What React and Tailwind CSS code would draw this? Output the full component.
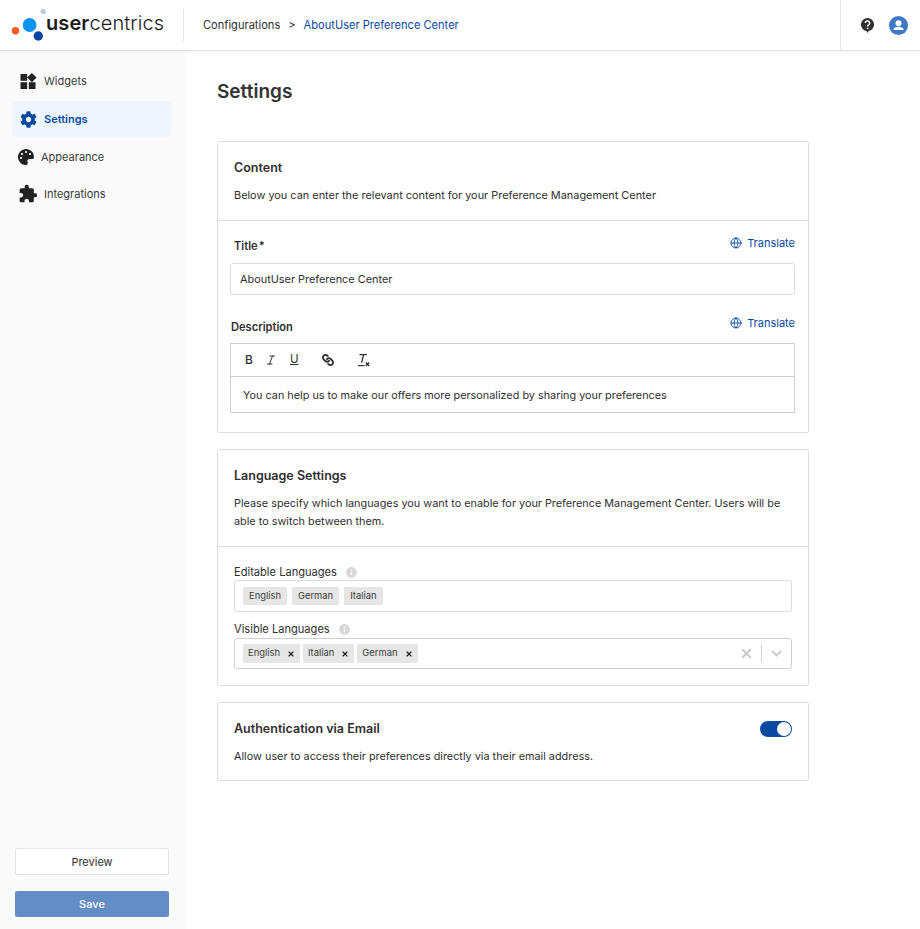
import React from "react";
import { Globe, Italic, X, ChevronDown } from "lucide-react";
import { FaCog, FaPalette, FaLink } from "react-icons/fa";
import { MdWidgets, MdExtension, MdInfo } from "react-icons/md";

const NAV_LINKS = [
  { name: "Widgets", icon: MdWidgets, size: 21, box: "ml-[6px] w-[20px]", gap: "ml-[6px]", extra: "text-[#3a3a3a]" },
  { name: "Settings", icon: FaCog, size: 17, box: "ml-[6px] w-[20px]", gap: "ml-[6px]", active: true, extra: "mt-[2px]" },
  { name: "Appearance", icon: FaPalette, size: 16, box: "ml-[5px] w-[18px]", gap: "ml-[6px]", extra: "mt-[2px] text-[#3a3a3a]" },
  { name: "Integrations", icon: MdExtension, size: 20, box: "ml-[6px] w-[20px]", gap: "ml-[6px]", extra: "mt-[1px] text-[#3a3a3a]" },
];

function Logo() {
  return (
    <div className="flex items-center">
      <svg width="48" height="44" viewBox="0 0 48 44" className="shrink-0">
        <circle cx="15.5" cy="27.7" r="3.7" fill="#f25a22" />
        <circle cx="29.6" cy="22" r="6.9" fill="#0f95f0" />
        <circle cx="38.3" cy="33" r="4.7" fill="#0d47a1" />
        <circle cx="43.3" cy="8.5" r="2.6" fill="#b6cfe6" />
      </svg>
      <span className="-ml-[2px] -mt-[4px] text-[20px] leading-none tracking-[0.005em] text-[#1b1b1b]">
        <span className="font-semibold">user</span>
        <span className="font-light">centrics</span>
      </span>
    </div>
  );
}

function HelpBubble() {
  return (
    <svg width="15" height="17" viewBox="0 0 16 18">
      <path d="M8 1a7 7 0 0 1 1.2 13.9L8 17l-1.2-2.1A7 7 0 0 1 8 1z" fill="#2f2f2f" />
      <path d="M5.7 6.4a2.3 2.3 0 1 1 3.6 1.9c-.8.5-1.2.9-1.2 1.7" fill="none" stroke="#fff" strokeWidth="1.6" />
      <circle cx="8.1" cy="12" r="1" fill="#fff" />
    </svg>
  );
}

function UserBadge() {
  return (
    <svg width="19" height="19" viewBox="0 0 19 19">
      <circle cx="9.5" cy="9.5" r="9.5" fill="#3f78c4" />
      <circle cx="9.5" cy="7.2" r="3" fill="#fff" />
      <path d="M4.5 14v-.8c0-1.5 2.2-2.4 5-2.4s5 .9 5 2.4v.8z" fill="#fff" />
    </svg>
  );
}

function ClearFormat() {
  return (
    <svg width="13" height="14" viewBox="0 0 13 14" fill="none" stroke="#333">
      <path d="M2.5 1.7h7.5M6.6 1.7 4.6 9.6" strokeWidth="1.3" />
      <path d="M1 12.6h6.5" strokeWidth="1.2" />
      <path d="M8.8 9.5l3.4 3.6M12.2 9.5l-3.4 3.6" strokeWidth="1.4" />
    </svg>
  );
}

function TranslateLink() {
  return (
    <button className="flex items-center gap-[5px] text-[11px] leading-none text-[#0b4aa3]">
      <Globe className="h-[12px] w-[12px]" strokeWidth={1.8} />
      <span>Translate</span>
    </button>
  );
}

function Card({ children }) {
  return <section className="w-[592px] rounded-[2px] border border-[#dedede] bg-white">{children}</section>;
}

function Tag({ label, removable }) {
  return (
    <span className={`flex items-center rounded-[1px] bg-[#e6e6e6] text-[9.4px] text-[#3b3b3b] ${removable ? "h-[19px] px-[5px]" : "h-[18px] px-[6px]"}`}>
      {label}
      {removable && <X className="ml-[7px] h-[8px] w-[8px] text-[#222]" strokeWidth={3.5} />}
    </span>
  );
}

function InfoDot() {
  return <MdInfo className="h-[13px] w-[13px] text-[#d9d9d9]" />;
}

export default function App() {
  return (
    <div className="flex min-h-[929px] flex-col bg-white text-[#2f2f2f] [font-family:Inter,'Liberation_Sans',sans-serif]">
      <header className="z-10 flex h-[51px] shrink-0 items-center border-b border-[#e3e3e3] bg-white shadow-[0_1px_2px_rgba(0,0,0,0.06)]">
        <div className="flex h-[32px] w-[184px] items-center border-r border-[#e3e3e3]">
          <Logo />
        </div>
        <nav className="ml-[19px] flex items-center text-[11.1px] text-[#2f2f2f]">
          <span>Configurations</span>
          <span className="mx-[8px]">&gt;</span>
          <span className="text-[#0b4aa3]">AboutUser Preference Center</span>
        </nav>
        <div className="ml-auto flex h-full w-[80px] items-center border-l border-[#e3e3e3] pl-[19px]">
          <HelpBubble />
          <span className="ml-[14px]">
            <UserBadge />
          </span>
        </div>
      </header>

      <div className="flex flex-1">
        <aside className="flex w-[185px] shrink-0 flex-col bg-[#fafafa] pb-[12px] pl-[12px] pr-[13px] pt-[12px]">
          <nav className="flex flex-col">
            {NAV_LINKS.map((item) => {
              const Icon = item.icon;
              return (
                <a
                  key={item.name}
                  className={`flex h-[36px] items-center rounded-[6px] text-[11px] ${item.active ? "bg-[#f0f6fd] font-semibold text-[#0b4aa3]" : ""} ${item.extra}`}
                >
                  <span className={`flex items-center justify-center ${item.name === "Settings" ? "text-[#0b4aa3]" : "text-[#222]"} ${item.box}`}>
                    <Icon size={item.size} />
                  </span>
                  <span className={item.gap}>{item.name}</span>
                </a>
              );
            })}
          </nav>
          <div className="mt-auto flex flex-col gap-[16px] px-[3px]">
            <button className="h-[27px] rounded-[2px] border border-[#e6e6e6] bg-white pt-[1px] text-[11px] text-[#2f2f2f]">Preview</button>
            <button className="h-[26px] rounded-[2px] bg-[#638dc6] text-[11px] font-medium text-white">Save</button>
          </div>
        </aside>

        <main className="flex-1 pl-[32px] pt-[29px]">
          <h1 className="mb-[37px] text-[19px] font-semibold leading-[24px] text-[#333]">Settings</h1>

          <div className="flex flex-col gap-[16px]">
            <Card>
              <div className="border-b border-[#dedede] px-[16px] py-[17px]">
                <h2 className="text-[12.5px] font-semibold leading-[18px]">Content</h2>
                <p className="mt-[10px] text-[10.9px] leading-[16px]">Below you can enter the relevant content for your Preference Management Center</p>
              </div>
              <div className="pb-[19px] pl-[12px] pr-[13px] pt-[16px]">
                <div className="flex items-start justify-between">
                  <label className="ml-[4px] mt-[2px] text-[11.1px] font-semibold leading-[14px]">
                    Title<span className="ml-[1px]">*</span>
                  </label>
                  <TranslateLink />
                </div>
                <div className="mt-[10px] flex h-[32px] items-center rounded-[3px] border border-[#dcdcdc] pl-[9px] text-[10.9px]">AboutUser Preference Center</div>

                <div className="mt-[22px] flex items-start justify-between">
                  <label className="ml-[1px] mt-[3px] text-[11.1px] font-semibold leading-[14px]">Description</label>
                  <TranslateLink />
                </div>
                <div className="mt-[9px] border border-[#cfcfcf]">
                  <div className="flex h-[33px] items-center border-b border-[#cfcfcf] pl-[14px] text-[#333]">
                    <span className="w-[20px] text-[12px] font-medium leading-none">B</span>
                    <Italic className="mr-[13px] h-[12px] w-[12px]" strokeWidth={2} />
                    <span className="w-[32px] text-[11.5px] leading-none underline">U</span>
                    <FaLink className="mr-[23px] h-[12px] w-[12px] rotate-90" />
                    <ClearFormat />
                  </div>
                  <div className="flex h-[35px] items-center pl-[12px] pt-[1px] text-[10.85px]">You can help us to make our offers more personalized by sharing your preferences</div>
                </div>
              </div>
            </Card>

            <Card>
              <div className="border-b border-[#dedede] px-[16px] pb-[16px] pt-[17px]">
                <h2 className="text-[12.5px] font-semibold leading-[18px]">Language Settings</h2>
                <p className="mt-[9px] text-[10.85px] leading-[18px]">Please specify which languages you want to enable for your Preference Management Center. Users will be able to switch between them.</p>
              </div>
              <div className="px-[16px] pb-[16px] pt-[18px]">
                <div className="flex items-center gap-[8px] text-[11.1px] leading-[14px]">
                  <span>Editable Languages</span>
                  <InfoDot />
                </div>
                <div className="mt-[1px] flex h-[32px] items-center gap-[5px] rounded-[3px] border border-[#dcdcdc] pl-[8px]">
                  <Tag label="English" />
                  <Tag label="German" />
                  <Tag label="Italian" />
                </div>
                <div className="mt-[10px] flex items-center gap-[8px] text-[11.1px] leading-[14px]">
                  <span>Visible Languages</span>
                  <InfoDot />
                </div>
                <div className="mt-[2px] flex h-[31px] items-center gap-[3px] rounded-[3px] border border-[#cfcfcf] pl-[8px] pr-[6px]">
                  <Tag label="English" removable />
                  <Tag label="Italian" removable />
                  <Tag label="German" removable />
                  <X className="ml-auto h-[15px] w-[15px] text-[#c8c8c8]" strokeWidth={3} />
                  <span className="ml-[4px] mr-[3px] h-[17px] w-px bg-[#cfcfcf]" />
                  <ChevronDown className="h-[17px] w-[17px] text-[#c8c8c8]" strokeWidth={2.5} />
                </div>
              </div>
            </Card>

            <Card>
              <div className="px-[16px] pb-[16px] pt-[17px]">
                <div className="flex items-center justify-between">
                  <h2 className="text-[12.5px] font-semibold leading-[18px]">Authentication via Email</h2>
                  <span className="flex h-[16px] w-[32px] items-center justify-end rounded-full bg-[#0b4aa3] pr-[1px]">
                    <span className="h-[14px] w-[14px] rounded-full bg-white" />
                  </span>
                </div>
                <p className="mt-[10px] text-[10.85px] leading-[16px]">Allow user to access their preferences directly via their email address.</p>
              </div>
            </Card>
          </div>
        </main>
      </div>
    </div>
  );
}
